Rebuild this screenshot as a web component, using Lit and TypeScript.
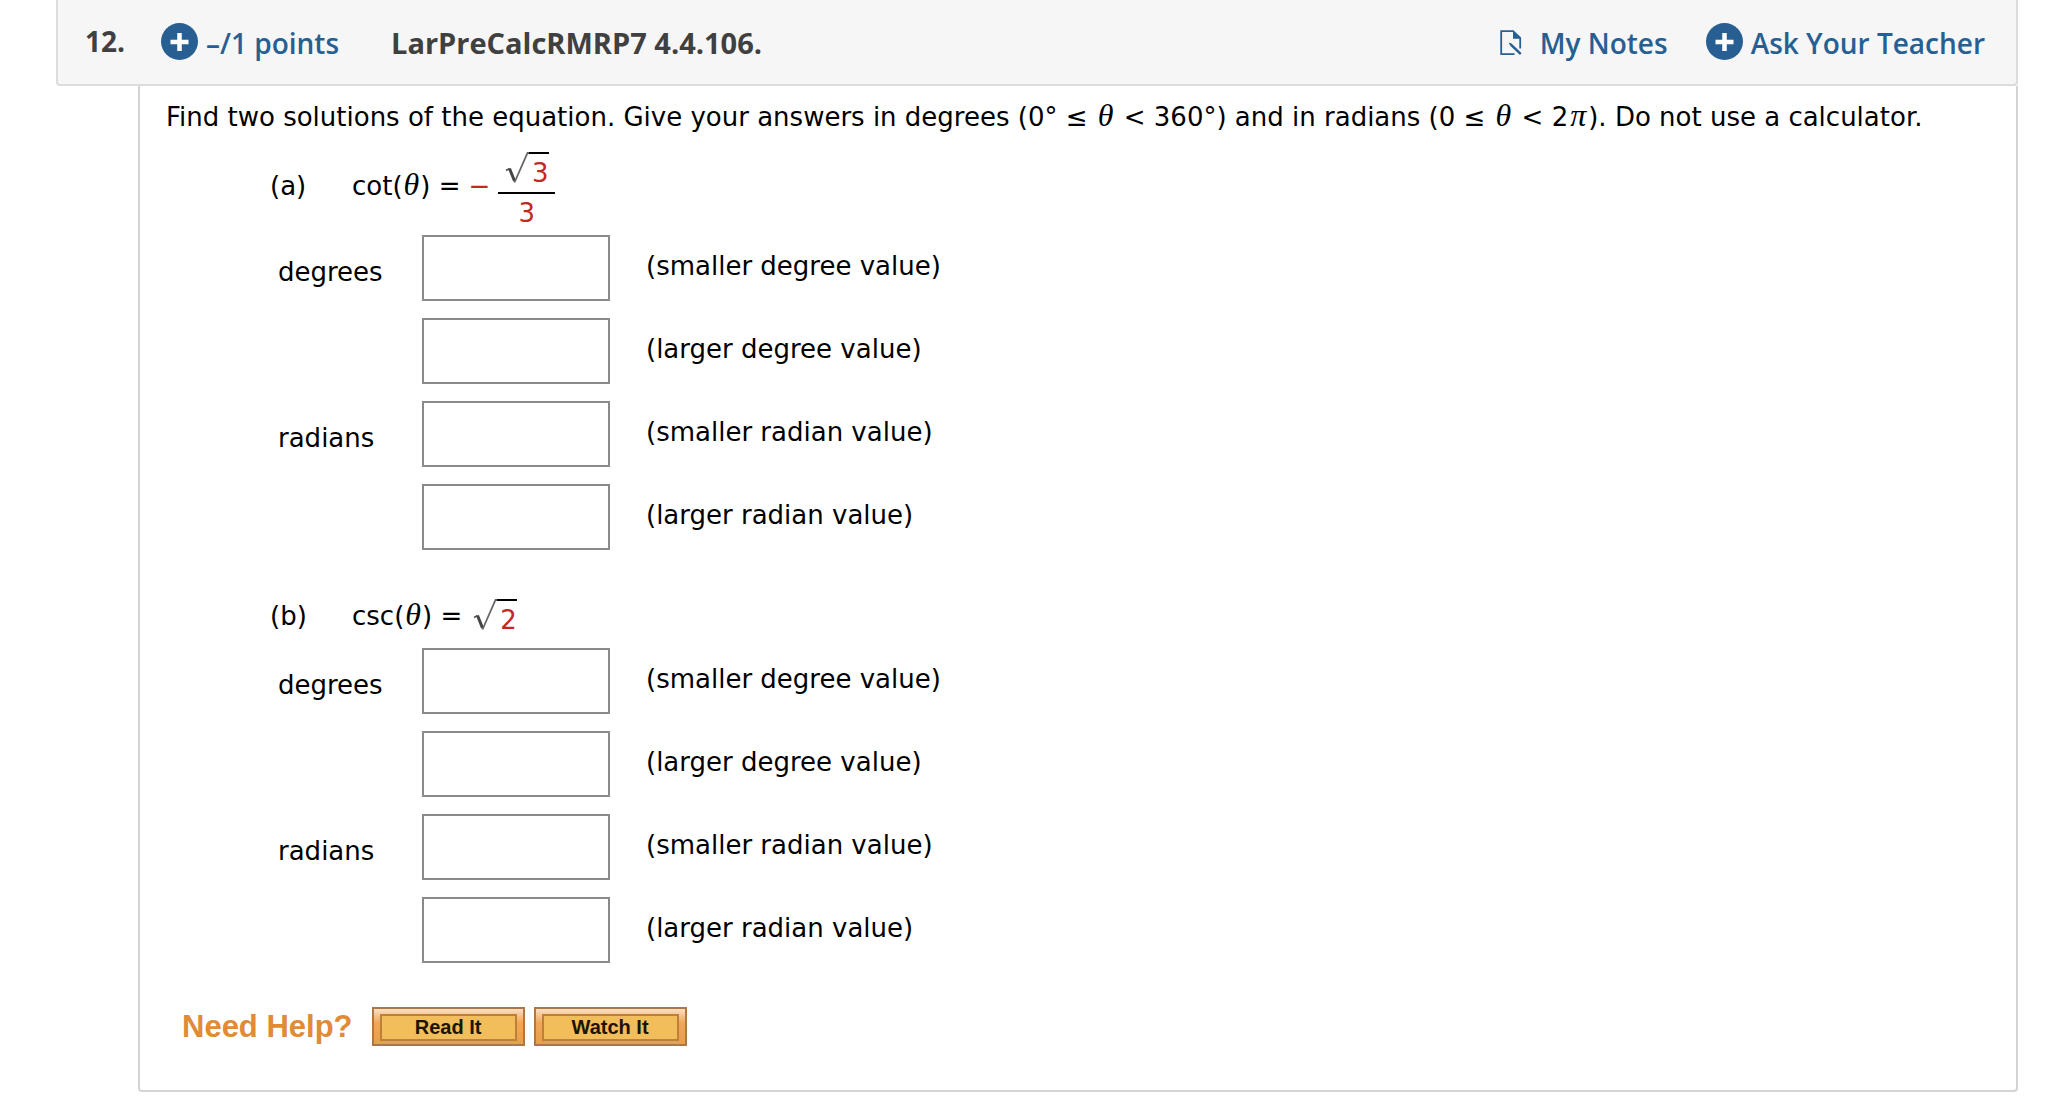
import { LitElement, html, css, svg } from "lit";
import { customElement } from "lit/decorators.js";

interface Field {
  unit: string;
  note: string;
}

const FIELDS: Field[] = [
  { unit: "degrees", note: "(smaller degree value)" },
  { unit: "", note: "(larger degree value)" },
  { unit: "radians", note: "(smaller radian value)" },
  { unit: "", note: "(larger radian value)" },
];

const plusIcon = html`<svg class="plus" viewBox="0 0 37 37" aria-hidden="true">
  ${svg`<circle cx="18.500" cy="18.500" r="18.500" fill="#285f93"/><path d="M18.500 10V28M9.500 19H27.500" stroke="#fff" stroke-width="4.500"/>`}
</svg>`;

const noteIcon = html`<svg class="note-icon" viewBox="0 0 22 26" aria-hidden="true">
  ${svg`<path d="M14.500 24.200H1.200V1.200H13L20.200 8V18.500" fill="none" stroke="#285f93" stroke-width="1.800"/>
  <path d="M13 0.500L21 8.800H13Z" fill="#285f93"/>
  <path d="M8.500 12.600L11.500 13.500L21.500 23L20 25L10.500 16Z" fill="#285f93"/>`}
</svg>`;

const theta = html`<i class="sym">θ</i>`;

const root = (digit: string) => html`<span class="root"
  ><svg class="radical" viewBox="0 0 24 32" aria-hidden="true">
    ${svg`<path d="M1 18.500L4.500 16.500" stroke="#555" stroke-width="1.500" fill="none"/><path d="M4.500 16.500L9.500 29" stroke="#444" stroke-width="3" fill="none"/><path d="M9.500 30.500L22.500 1H24" stroke="#666" stroke-width="1.800" fill="none"/>`}
  </svg><span class="radicand">${digit}</span></span>`;

@customElement("answer-grid")
export class AnswerGrid extends LitElement {
  static properties = { part: { type: String } };
  declare part: string;

  static styles = css`
    :host {
      display: block;
    }
    .row {
      display: grid;
      grid-template-columns: 144px 224px 1fr;
      align-items: center;
      margin-bottom: 17px;
    }
    .unit {
      padding-top: 8px;
    }
    .note {
      padding-bottom: 4px;
    }
    .box {
      box-sizing: border-box;
      width: 188px;
      height: 66px;
      border: 2px solid #8a8a8a;
      border-radius: 0;
      background: #fff;
      padding: 0 12px;
      font: inherit;
      display: block;
    }
  `;

  render() {
    return FIELDS.map((f, i) => {
      const id = `${this.part}-${i}`;
      return html`<div class="row">
        <span class="unit">${f.unit}</span>
        <input class="box" id=${id} type="text" />
        <label class="note" for=${id}>${f.note}</label>
      </div>`;
    });
  }
}

@customElement("app-root")
export class AppRoot extends LitElement {
  static styles = css`
    :host {
      display: block;
      background: #fff;
      color: #000;
      font: 26px/32px Verdana, "DejaVu Sans", sans-serif;
      padding: 0 30px 0 56px;
    }
    .bar {
      display: flex;
      align-items: center;
      box-sizing: border-box;
      height: 86px;
      padding: 0 31px 2px 27px;
      background: #f6f6f6;
      border: 2px solid #dcdcdc;
      border-top: 0;
      border-radius: 0 0 4px 4px;
      font: 600 28px/38px "Open Sans", sans-serif;
      color: #404040;
    }
    .number {
      width: 76px;
      font-weight: 700;
    }
    .title {
      margin: 0 auto 0 52px;
      padding-top: 4px;
      font: 700 29px/38px "Open Sans", sans-serif;
    }
    .link {
      display: flex;
      align-items: center;
      gap: 8px;
      color: #285f93;
      text-decoration: none;
    }
    .text {
      padding-top: 4px;
    }
    .notes {
      gap: 18px;
      margin-right: 38px;
    }
    .plus {
      width: 37px;
      height: 37px;
    }
    .note-icon {
      width: 22px;
      height: 26px;
      padding-top: 3px;
    }
    .body {
      margin-left: 82px;
      border: 2px solid #d4d4d4;
      border-top: 0;
      border-radius: 0 0 4px 4px;
      padding: 15px 24px 44px 26px;
    }
    .prompt {
      margin: 0 0 18px;
    }
    .sym {
      font-family: "Liberation Serif", serif;
      font-size: 32px;
      line-height: 0;
      padding: 0 1px;
    }
    .prompt .sym {
      padding: 0 2px;
    }
    .part {
      margin-left: 104px;
    }
    .equation {
      display: flex;
      align-items: center;
    }
    .tag {
      width: 82px;
    }
    .first {
      align-items: flex-start;
      height: 84px;
    }
    .first > .lead {
      padding-top: 19px;
    }
    .second {
      height: 64px;
      margin-top: 34px;
    }
    .second .root {
      margin-left: 11px;
    }
    .red {
      color: #c22a1f;
    }
    .grid {
      margin-left: 8px;
    }
    .minus {
      margin: 0 8px;
    }
    .fraction {
      display: flex;
      flex-direction: column;
      align-items: center;
      gap: 3px;
      width: 57px;
      padding-top: 1px;
    }
    .numer {
      width: 100%;
      display: flex;
      justify-content: center;
      border-bottom: 2px solid #000;
      padding-bottom: 5px;
    }
    .root {
      display: flex;
      color: #c22a1f;
    }
    .radical {
      width: 24px;
      height: 32px;
    }
    .radicand {
      border-top: 2px solid #000;
      padding: 5px 0 0 3px;
      line-height: 28px;
    }
    .help {
      display: flex;
      align-items: center;
      gap: 9px;
      margin: 44px 0 0 16px;
    }
    .need {
      font: 700 31px/38px "Liberation Sans", sans-serif;
      color: #e08b36;
      margin-right: 10px;
    }
    .btn {
      box-sizing: border-box;
      width: 153px;
      height: 39px;
      padding: 5px 6px;
      border: 2px solid #b07840;
      border-radius: 0;
      background: linear-gradient(#fbdfc4, #f0a656 40%, #e8a04c);
      cursor: pointer;
    }
    .face {
      display: block;
      border: 2px solid #bd8038;
      background: #f2bd5b;
      font: 700 20px/23px "Liberation Sans", sans-serif;
      color: #1d1400;
    }
  `;

  render() {
    return html`
      <header class="bar">
        <span class="number">12.</span>
        <a class="link" href="#points">${plusIcon}<span class="text">–/1 points</span></a>
        <h1 class="title">LarPreCalcRMRP7 4.4.106.</h1>
        <a class="link notes" href="#notes">${noteIcon}<span class="text">My Notes</span></a>
        <a class="link" href="#ask">${plusIcon}<span class="text">Ask Your Teacher</span></a>
      </header>
      <main class="body">
        <p class="prompt">
          Find two solutions of the equation. Give your answers in degrees (0° ≤ ${theta} &lt; 360°)
          and in radians (0 ≤ ${theta} &lt; 2<i class="sym">π</i>). Do not use a calculator.
        </p>
        <section class="part">
          <div class="equation first">
            <span class="tag lead">(a)</span>
            <span class="lead">cot(${theta}) =</span>
            <span class="lead minus red">−</span>
            <span class="fraction">
              <span class="numer">${root("3")}</span>
              <span class="red">3</span>
            </span>
          </div>
          <answer-grid class="grid" part="a"></answer-grid>
        </section>
        <section class="part">
          <div class="equation second">
            <span class="tag">(b)</span>
            <span>csc(${theta}) =</span>
            ${root("2")}
          </div>
          <answer-grid class="grid" part="b"></answer-grid>
        </section>
        <div class="help">
          <span class="need">Need Help?</span>
          <button class="btn" type="button"><span class="face">Read It</span></button>
          <button class="btn" type="button"><span class="face">Watch It</span></button>
        </div>
      </main>
    `;
  }
}
